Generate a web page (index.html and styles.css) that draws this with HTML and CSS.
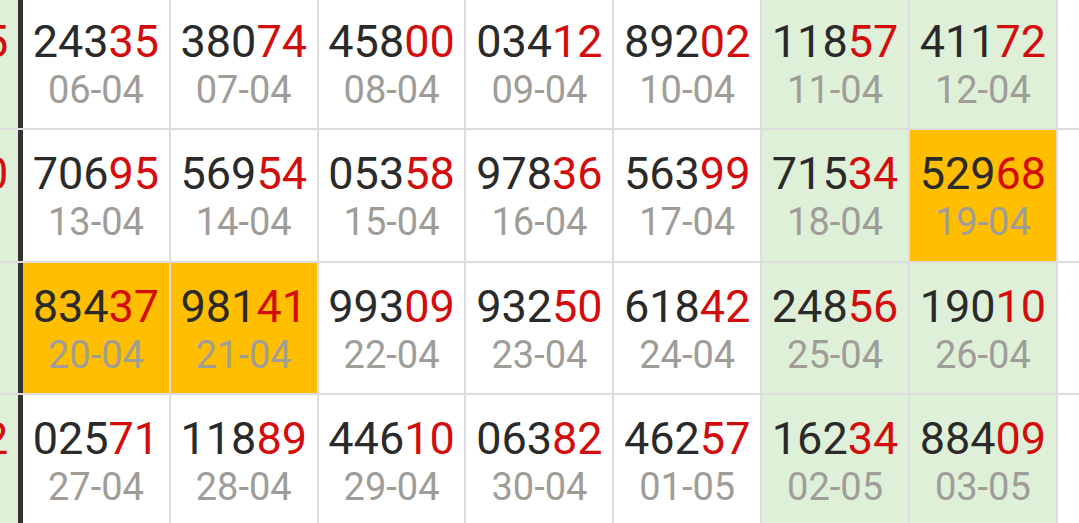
FILE: index.html
```html
<!DOCTYPE html>
<html>
	<head>
		<meta charset="utf-8">
		<title>Kết quả</title>

		<link rel="stylesheet" href="styles.css">
	</head>
	<body>
		<div class="board">
			<div class="row">
				<div class="cell side"><div class="num">567<b>25</b></div></div>
				<div class="cell"><div class="num">243<b>35</b></div><div class="date">06-04</div></div>
				<div class="cell"><div class="num">380<b>74</b></div><div class="date">07-04</div></div>
				<div class="cell"><div class="num">458<b>00</b></div><div class="date">08-04</div></div>
				<div class="cell"><div class="num">034<b>12</b></div><div class="date">09-04</div></div>
				<div class="cell"><div class="num">892<b>02</b></div><div class="date">10-04</div></div>
				<div class="cell weekend"><div class="num">118<b>57</b></div><div class="date">11-04</div></div>
				<div class="cell weekend"><div class="num">411<b>72</b></div><div class="date">12-04</div></div>
			</div>
			<div class="row">
				<div class="cell side"><div class="num">493<b>70</b></div></div>
				<div class="cell"><div class="num">706<b>95</b></div><div class="date">13-04</div></div>
				<div class="cell"><div class="num">569<b>54</b></div><div class="date">14-04</div></div>
				<div class="cell"><div class="num">053<b>58</b></div><div class="date">15-04</div></div>
				<div class="cell"><div class="num">978<b>36</b></div><div class="date">16-04</div></div>
				<div class="cell"><div class="num">563<b>99</b></div><div class="date">17-04</div></div>
				<div class="cell weekend"><div class="num">715<b>34</b></div><div class="date">18-04</div></div>
				<div class="cell hit"><div class="num">529<b>68</b></div><div class="date">19-04</div></div>
			</div>
			<div class="row">
				<div class="cell side"></div>
				<div class="cell hit"><div class="num">834<b>37</b></div><div class="date">20-04</div></div>
				<div class="cell hit"><div class="num">981<b>41</b></div><div class="date">21-04</div></div>
				<div class="cell"><div class="num">993<b>09</b></div><div class="date">22-04</div></div>
				<div class="cell"><div class="num">932<b>50</b></div><div class="date">23-04</div></div>
				<div class="cell"><div class="num">618<b>42</b></div><div class="date">24-04</div></div>
				<div class="cell weekend"><div class="num">248<b>56</b></div><div class="date">25-04</div></div>
				<div class="cell weekend"><div class="num">190<b>10</b></div><div class="date">26-04</div></div>
			</div>
			<div class="row">
				<div class="cell side"><div class="num">778<b>02</b></div></div>
				<div class="cell"><div class="num">025<b>71</b></div><div class="date">27-04</div></div>
				<div class="cell"><div class="num">118<b>89</b></div><div class="date">28-04</div></div>
				<div class="cell"><div class="num">446<b>10</b></div><div class="date">29-04</div></div>
				<div class="cell"><div class="num">063<b>82</b></div><div class="date">30-04</div></div>
				<div class="cell"><div class="num">462<b>57</b></div><div class="date">01-05</div></div>
				<div class="cell weekend"><div class="num">162<b>34</b></div><div class="date">02-05</div></div>
				<div class="cell weekend"><div class="num">884<b>09</b></div><div class="date">03-05</div></div>
			</div>
		</div>
	</body>
</html>
```

FILE: styles.css
```css
* {
	margin: 0;
	padding: 0;
	box-sizing: border-box;
}

body {
	background: #ffffff;
	font-family: Roboto, "Noto Sans", sans-serif;
	overflow: hidden;
}

.board {
	margin-top: -2.5px;
	margin-left: -128px;
}

.row {
	display: flex;
	height: 132.5px;
	border-bottom: 2px solid #dddddd;
}

.cell {
	width: 147.83px;
	flex-shrink: 0;
	padding-top: 19px;
	border-right: 2px solid #dddddd;
	text-align: center;
	background: #ffffff;
}

.cell.side {
	width: 151px;
	border-right: 5px solid #333333;
	background: #dff0d8;
	overflow: hidden;
}

.cell.weekend {
	background: #dff0d8;
}

.cell.hit {
	background: #ffbf00;
}

.num {
	font-size: 45px;
	line-height: 49px;
	color: #2a2a2a;
}

.num b {
	font-weight: normal;
	color: #d30d0d;
}

.date {
	font-size: 38px;
	line-height: 48px;
	color: #a09d98;
}
```
